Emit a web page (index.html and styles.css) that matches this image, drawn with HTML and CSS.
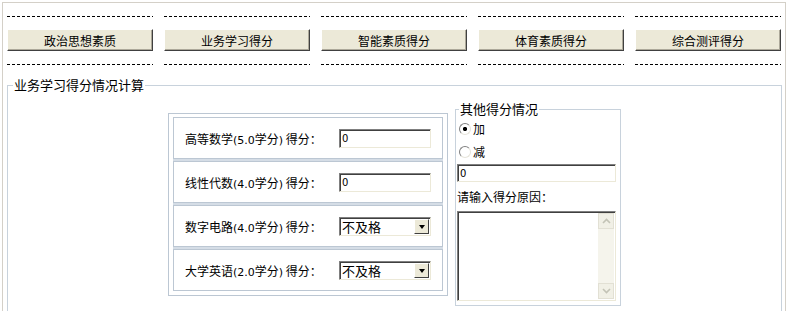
FILE: index.html
```html
<!DOCTYPE html>
<html lang="zh-CN">
<head>
  <meta charset="UTF-8">
  <title>业务学习得分</title>
  <link rel="stylesheet" href="styles.css">
</head>
<body>
  <div class="frame">
    <div class="nav">
      <div class="nav-item"><div class="dash"></div><button class="tab">政治思想素质</button><div class="dash"></div></div>
      <div class="nav-item"><div class="dash"></div><button class="tab">业务学习得分</button><div class="dash"></div></div>
      <div class="nav-item"><div class="dash"></div><button class="tab">智能素质得分</button><div class="dash"></div></div>
      <div class="nav-item"><div class="dash"></div><button class="tab">体育素质得分</button><div class="dash"></div></div>
      <div class="nav-item"><div class="dash"></div><button class="tab">综合测评得分</button><div class="dash"></div></div>
    </div>

    <fieldset class="calc">
      <legend>业务学习得分情况计算</legend>
      <div class="calc-body">
        <div class="scores">
          <div class="score-row">
            <label>高等数学<span class="num">(5.0</span>学分<span class="num">)</span> 得分：</label>
            <input class="field" type="text" value="0">
          </div>
          <div class="score-row">
            <label>线性代数<span class="num">(4.0</span>学分<span class="num">)</span> 得分：</label>
            <input class="field" type="text" value="0">
          </div>
          <div class="score-row">
            <label>数字电路<span class="num">(4.0</span>学分<span class="num">)</span> 得分：</label>
            <span class="pick">
              <select>
                <option>不及格</option>
                <option>及格</option>
                <option>中等</option>
                <option>良好</option>
                <option>优秀</option>
              </select>
              <span class="pick-btn"><span class="tri"></span></span>
            </span>
          </div>
          <div class="score-row">
            <label>大学英语<span class="num">(2.0</span>学分<span class="num">)</span> 得分：</label>
            <span class="pick">
              <select>
                <option>不及格</option>
                <option>及格</option>
                <option>中等</option>
                <option>良好</option>
                <option>优秀</option>
              </select>
              <span class="pick-btn"><span class="tri"></span></span>
            </span>
          </div>
        </div>

        <fieldset class="other">
          <legend>其他得分情况</legend>
          <label class="opt"><input type="radio" name="op" checked>加</label>
          <label class="opt"><input type="radio" name="op">减</label>
          <input class="field extra" type="text" value="0">
          <div class="reason-label">请输入得分原因：</div>
          <div class="reason">
            <textarea></textarea>
            <div class="vscroll">
              <span class="sb-btn">
                <svg width="9" height="6" viewBox="0 0 9 6"><path d="M1 5 L4.5 1.5 L8 5" fill="none" stroke="#c3c3b6" stroke-width="1.6"/></svg>
              </span>
              <span class="sb-track"></span>
              <span class="sb-btn">
                <svg width="9" height="6" viewBox="0 0 9 6"><path d="M1 1 L4.5 4.5 L8 1" fill="none" stroke="#c3c3b6" stroke-width="1.6"/></svg>
              </span>
            </div>
          </div>
        </fieldset>
      </div>
    </fieldset>
  </div>
</body>
</html>
```

FILE: styles.css
```css
body {
  margin: 0;
  background: #fff;
  font-family: "SimSun", "Noto Sans CJK SC", sans-serif;
  font-size: 12px;
  color: #000;
}

.frame {
  margin: 2px 4px 0 2px;
  border: 1px solid #d4d0c8;
  border-bottom: none;
  min-height: 340px;
}

/* top tabs */
.nav {
  display: flex;
  gap: 11px;
  padding: 13px 0 0 4px;
}

.nav-item {
  width: 146px;
  display: flex;
  flex-direction: column;
}

.dash {
  height: 1px;
  background: repeating-linear-gradient(to right, #000 0 3px, transparent 3px 5px);
}

.tab {
  height: 22px;
  margin: 12px 0 13px;
  padding: 0;
  background: #ece9d8;
  border: 1px solid;
  border-color: #fff #404040 #404040 #fff;
  box-shadow: inset -1px -1px 0 #aca899;
  font-family: inherit;
  font-size: 12px;
  color: #000;
}

/* main fieldset */
fieldset {
  min-width: 0;
  margin: 0;
}

legend {
  font-size: 13px;
  line-height: 16px;
  padding: 0 1px;
}

.calc {
  margin: 12px 3px 0 4px;
  padding: 8px 0 20px 5px;
  border: 1px solid #c8d2dc;
}

.calc-body {
  display: flex;
  align-items: flex-start;
  padding-left: 155px;
}

.scores {
  width: 280px;
  box-sizing: border-box;
  margin-top: 12px;
  padding: 3px 4px 4px;
  border: 1px solid #bcc7d3;
}

.score-row {
  height: 42px;
  box-sizing: border-box;
  display: flex;
  align-items: center;
  padding-left: 11px;
  border: 1px solid #bcc7d3;
}

.score-row + .score-row {
  margin-top: 2px;
  box-shadow: 0 -2px 0 #d5dde6;
}

.score-row label {
  width: 154px;
}

.num {
  font-family: "DejaVu Sans", sans-serif;
  font-size: 11px;
}

.field {
  box-sizing: border-box;
  width: 92px;
  height: 19px;
  padding: 0 2px;
  border: 1px solid;
  border-color: #7f7f7f #ece9d8 #ece9d8 #7f7f7f;
  box-shadow: inset 1px 1px 0 #404040;
  background: #fff;
  font-family: "DejaVu Sans", sans-serif;
  font-size: 10px;
  outline: none;
}

.pick {
  box-sizing: border-box;
  display: inline-flex;
  width: 92px;
  height: 19px;
  border: 1px solid;
  border-color: #7f7f7f #ece9d8 #ece9d8 #7f7f7f;
  box-shadow: inset 1px 1px 0 #404040;
  padding: 1px 1px 1px 1px;
  background: #fff;
}

.pick select {
  flex: 1;
  min-width: 0;
  border: none;
  padding: 0 0 0 1px;
  appearance: none;
  background: #fff;
  font-family: inherit;
  font-size: 13px;
  line-height: 15px;
  outline: none;
  color: #000;
}

.pick-btn {
  box-sizing: border-box;
  width: 15px;
  display: flex;
  align-items: center;
  justify-content: center;
  background: #ece9d8;
  border: 1px solid;
  border-color: #fff #404040 #404040 #fff;
}

.tri {
  width: 0;
  height: 0;
  border-left: 3.5px solid transparent;
  border-right: 3.5px solid transparent;
  border-top: 4px solid #000;
  margin-top: 1px;
}

/* other scores */
.other {
  width: 166px;
  box-sizing: border-box;
  margin-left: 7px;
  padding: 0 1px 4px;
  border: 1px solid #c8d2dc;
}

.other legend {
  margin-left: 2px;
}

.opt {
  display: flex;
  align-items: center;
  height: 23px;
}

.opt input {
  appearance: none;
  width: 12px;
  height: 12px;
  margin: 0 2px 0 2px;
  border-radius: 50%;
  border: 1px solid;
  border-color: #808080 #e6e4da #e6e4da #808080;
  background: #fff;
}

.opt input:checked {
  background: radial-gradient(circle, #000 0 1.8px, #fff 2.4px);
}

.extra {
  display: block;
  width: 159px;
  height: 18px;
  margin-top: 1px;
}

.reason-label {
  padding: 6px 0 5px;
  line-height: 18px;
}

.reason {
  box-sizing: border-box;
  display: flex;
  width: 159px;
  height: 90px;
  border: 1px solid;
  border-color: #7f7f7f #ece9d8 #ece9d8 #7f7f7f;
  box-shadow: inset 1px 1px 0 #404040;
  padding: 1px 1px 1px 1px;
  background: #fff;
}

.reason textarea {
  flex: 1;
  min-width: 0;
  border: none;
  resize: none;
  outline: none;
  padding: 1px;
  font-family: inherit;
  font-size: 12px;
}

.vscroll {
  width: 16px;
  display: flex;
  flex-direction: column;
  background: #f5f4ec;
}

.sb-btn {
  height: 16px;
  box-sizing: border-box;
  display: flex;
  align-items: center;
  justify-content: center;
  background: #f1f0e6;
  border: 1px solid #e2e0d4;
}

.sb-track {
  flex: 1;
}
```
